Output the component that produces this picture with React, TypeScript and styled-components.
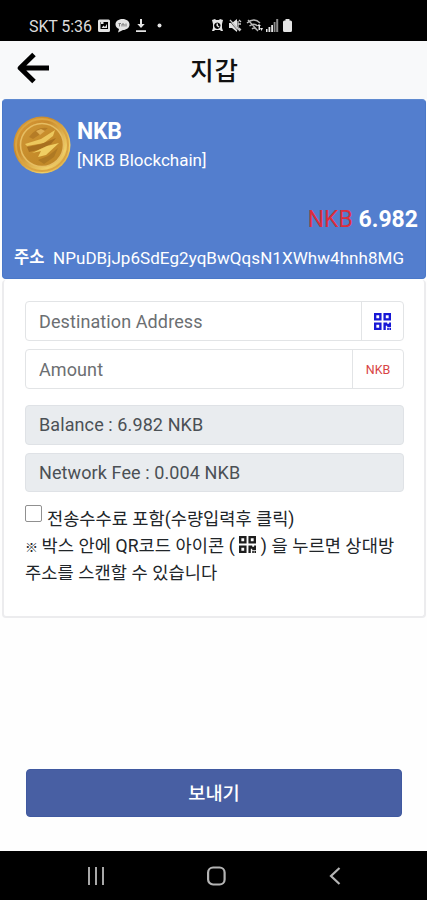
import React from 'react';
import styled, { createGlobalStyle } from 'styled-components';

const GlobalStyle = createGlobalStyle`
  * { box-sizing: border-box; }
  body { margin: 0; background: #fff; }
  button, input { font-family: inherit; }
`;

const Screen = styled.div`
  width: 427px;
  height: 900px;
  display: flex;
  flex-direction: column;
  overflow: hidden;
  background: #fefefe;
  color: #212529;
  font-family: Roboto, 'Noto Sans CJK KR', sans-serif;
`;

const StatusBar = styled.div`
  flex: none;
  height: 41px;
  padding: 12px 0 0 29px;
  display: flex;
  align-items: flex-start;
  background: #000;
  color: #dcdcdc;
`;

const Carrier = styled.span`
  width: 68px;
  font-size: 16px;
  line-height: 29px;
  letter-spacing: -0.1px;
  white-space: nowrap;
`;

const StatusIcons = styled.svg`
  flex: none;
  display: block;
`;

const Header = styled.header`
  flex: none;
  height: 58px;
  padding: 0 17px;
  display: grid;
  grid-template-columns: 34px 1fr 34px;
  align-items: center;
  background: #f8f9fa;
`;

const BackButton = styled.button`
  display: flex;
  padding: 0 0 4px;
  border: 0;
  background: none;
`;

const Title = styled.h1`
  margin: 0;
  padding: 1px 0 0 2px;
  text-align: center;
  font-size: 25.5px;
  font-weight: 500;
  line-height: 54px;
  color: #111;
  letter-spacing: 0.8px;
`;

const WalletCard = styled.section`
  flex: none;
  height: 180px;
  margin: 0 1px 0 2px;
  padding: 16px 7px 0 10px;
  border-radius: 4px;
  border: 1px solid #4a78c8;
  border-top-color: #5f8ad0;
  background: #537ece;
  color: #fff;
`;

const TokenRow = styled.div`
  display: flex;
  gap: 6px;
  height: 60px;
`;

const TokenText = styled.div`
  display: flex;
  flex-direction: column;
`;

const TokenName = styled.strong`
  margin-top: 1px;
  font-size: 23px;
  line-height: 29px;
  font-weight: 700;
  letter-spacing: -0.3px;
`;

const TokenChain = styled.span`
  font-size: 17px;
  line-height: 28px;
`;

const Amount = styled.div`
  margin-top: 28px;
  text-align: right;
  font-size: 23px;
  line-height: 31px;
  font-weight: 700;
  white-space: pre;
`;

const Unit = styled.span`
  font-weight: 400;
  color: #dc2d3c;
`;

const AddressRow = styled.div`
  margin-top: 9px;
  display: flex;
  line-height: 28px;
  white-space: nowrap;
`;

const AddressLabel = styled.strong`
  width: 40px;
  padding-left: 1px;
  font-size: 16.5px;
  font-weight: 700;
`;

const AddressValue = styled.span`
  font-size: 17px;
  letter-spacing: 0.06px;
`;

const SendCard = styled.section`
  flex: none;
  height: 338px;
  margin: 1px 1px 0 2px;
  padding: 21px 20px 0 21px;
  border: 2px solid #ececee;
  border-top: 0;
  border-radius: 4px;
  background: #fff;
`;

const FieldList = styled.div`
  display: flex;
  flex-direction: column;
  gap: 8px;
  width: 379px;
`;

const InputGroup = styled.div`
  display: flex;
  height: 40px;
  border: 1px solid #e2e4e6;
  border-radius: 4px;
  overflow: hidden;
`;

const Input = styled.input`
  flex: 1;
  min-width: 0;
  padding: 0 13px;
  border: 0;
  outline: 0;
  background: none;
  font-size: 18px;
  letter-spacing: 0.1px;
  &::placeholder { color: #6c6f72; opacity: 1; }
`;

const Addon = styled.div<{ $width: number }>`
  width: ${(p) => p.$width}px;
  display: flex;
  align-items: center;
  justify-content: center;
  border-left: 1px solid #e2e4e6;
  color: #d84444;
  font-size: 12.5px;
`;

const InfoList = styled(FieldList)`
  margin-top: 16px;
`;

const Info = styled.div`
  height: 39.5px;
  padding: 0 13px;
  border: 1px solid #dfe2e6;
  border-radius: 4px;
  background: #e9ecef;
  color: #4b5055;
  font-size: 18px;
  letter-spacing: 0.1px;
  line-height: 38px;
`;

const CheckLabel = styled.label`
  display: flex;
  margin-top: 12px;
  height: 29px;
  gap: 5px;
  font-size: 17.6px;
  line-height: 30px;
  white-space: nowrap;
`;

const Checkbox = styled.input`
  appearance: none;
  width: 17px;
  height: 17px;
  margin: 1px 0 0;
  border: 1px solid #909090;
  border-radius: 2px;
  background: #fff;
`;

const Hint = styled.p`
  margin: 0;
  font-size: 17.6px;
  line-height: 27px;
  letter-spacing: 0.08px;
  white-space: nowrap;
  svg { vertical-align: -1px; }
`;

const HintMark = styled.span`
  display: inline-block;
  width: 16.5px;
  font-size: 13px;
  line-height: 20px;
`;

const SendButton = styled.button`
  flex: none;
  width: 376px;
  height: 48px;
  margin: 151px 0 0 26px;
  border: 1px solid #4059a0;
  border-radius: 4px;
  padding: 2px 0 0;
  background: #485fa3;
  color: #fff;
  font-size: 18.7px;
  line-height: 44px;
  font-weight: 500;
`;

const NavBar = styled.nav`
  flex: none;
  height: 49px;
  margin-top: auto;
  padding: 1px 86px 0 85px;
  display: flex;
  align-items: center;
  justify-content: space-between;
  background: #000;
`;

const QrIcon = ({ size, color }: { size: number; color: string }) => (
  <svg width={size} height={size} viewBox="0 0 18 18" fill={color}>
    <path
      fillRule="evenodd"
      d="M0 0h8v8H0zM2.500 2.500v3h3v-3zM10 0h8v8h-8zM12.500 2.500v3h3v-3zM0 10h8v8H0zM2.500 12.500v3h3v-3zM10 10h4v1.500h2V10h2v5h-4v-1.500h-1.500V18H10zM14 16h1.700v2H14zM16.300 16H18v2h-1.700z"
    />
  </svg>
);

const Coin = () => (
  <svg width="58" height="58" viewBox="0 0 58 58">
    <defs>
      <linearGradient id="rim" x1="0" y1="0" x2="1" y2="1">
        <stop offset="0" stopColor="#dc9f3a" />
        <stop offset="0.35" stopColor="#c98a2c" />
        <stop offset="0.75" stopColor="#efcf68" />
        <stop offset="1" stopColor="#cc8f2c" />
      </linearGradient>
      <linearGradient id="face" x1="0" y1="0" x2="1" y2="1">
        <stop offset="0" stopColor="#cf9636" />
        <stop offset="0.5" stopColor="#c68c2b" />
        <stop offset="1" stopColor="#bd8526" />
      </linearGradient>
    </defs>
    <circle cx="29" cy="29" r="28.500" fill="url(#rim)" />
    <circle cx="29" cy="29" r="26" fill="none" stroke="#dba441" strokeWidth="2" />
    <circle cx="29" cy="29" r="21.500" fill="url(#face)" stroke="#e6bd62" strokeWidth="1.600" />
    <path d="M16 21q8-11 19-9l-6 5-9 6z" fill="#b57c26" />
    <path d="M23 15l5-2 4 2-5 4z" fill="#dfb055" />
    <path d="M12 28l16-5 14-9-2 6-9 7-17 3z" fill="#ecc75d" />
    <path d="M14 31l14-3 15-6-5 6-13 6-9 2z" fill="#a8701f" />
    <path d="M46 27L33 39l-8 2 3-6-9 2 15-7z" fill="#f0ce63" />
    <path d="M25 44l10-4 10-8-4 9-10 7z" fill="#ae7923" />
  </svg>
);

export default function App() {
  return (
    <Screen>
      <GlobalStyle />
      <StatusBar>
        <Carrier>SKT 5:36</Carrier>
        <StatusIcons width="200" height="29" viewBox="97 12 200 29" fill="#e4e4e4">
          <path
            fillRule="evenodd"
            d="M99.500 19.500h9q1.500 0 1.500 1.500v9.500q0 1.500-1.500 1.500h-9q-1.500 0-1.500-1.500V21q0-1.500 1.500-1.500zM100.500 22v7h7.500v-7zM101.500 28l2-2.500 1.500 1.500 2-3v4z"
          />
          <path d="M101 22h2.500v2H101z" />
          <path d="M122.500 19c4 0 7 2.300 7 5.500S126.500 30 123 30l-5 2.500 1-3.500c-2-1-3.500-2.500-3.500-4.500 0-3.200 3-5.500 7-5.500z" />
          <path d="M118.500 23.500h2.500M119.500 23.500v3M122 26.500v-2.500h2v2.500M126 23.500v3" stroke="#777" fill="none" />
          <path d="M140 19h2v5h2.700l-3.700 4-3.700-4h2.700zM136 30.300h10v1.700h-10z" />
          <circle cx="159.500" cy="25.500" r="2" />
          <path
            fillRule="evenodd"
            d="M212 20l3-1 1 1h3l1-1 3 1-1 4v4l1 3h-2l-1-1h-5l-1 1h-2l1-3v-4zM217.300 22.500a3.200 3.200 0 1 0 .01 0zM216.500 23.500h1.500v2l1.500 1-.8 1-2.200-1.500z"
          />
          <path d="M229 23h3l5-4v13l-5-4h-3z" />
          <path d="M230 20l10 11M239 20l2 2M238 24h3M239 28l2 2M238 21v9" stroke="#c8c8c8" strokeWidth="1.300" />
          <path d="M229.500 21l8.500 10" stroke="#333" strokeWidth="0.700" />
          <path
            d="M247 23q7-6 13 0M249.500 26q4.500-3.500 8 0M248 20l10 11M252 29q2-2 4 0"
            stroke="#b8b8b8"
            strokeWidth="1.400"
            fill="none"
          />
          <path d="M257 26l2-2 2 2zM258.500 25h1.500v5h-1.500zM260 28h3l-1.500 3z" />
          <path d="M266 29h1.500v3H266zM268.500 27h1.800v5h-1.800zM271.200 25h1.800v7h-1.800z" />
          <path d="M273.700 22h1.800v10h-1.800zM276.200 19h2v13h-2z" fill="#8d8d8d" />
          <path d="M285.500 19h4v1.500h1q1.500 0 1.500 1.500v8.500q0 1.500-1.500 1.500h-6q-1.500 0-1.500-1.500V22q0-1.500 1.500-1.500h1z" />
        </StatusIcons>
      </StatusBar>

      <Header>
        <BackButton aria-label="뒤로">
          <svg width="33" height="34" viewBox="0 0 33 34" fill="none" stroke="#000" strokeWidth="5">
            <path d="M17 3.500L3.200 17 17 30.500M4 17h28" strokeLinejoin="round" />
          </svg>
        </BackButton>
        <Title>지갑</Title>
      </Header>

      <WalletCard>
        <TokenRow>
          <Coin />
          <TokenText>
            <TokenName>NKB</TokenName>
            <TokenChain>[NKB Blockchain]</TokenChain>
          </TokenText>
        </TokenRow>
        <Amount>
          <Unit>NKB</Unit> 6.982
        </Amount>
        <AddressRow>
          <AddressLabel>주소</AddressLabel>
          <AddressValue>NPuDBjJp6SdEg2yqBwQqsN1XWhw4hnh8MG</AddressValue>
        </AddressRow>
      </WalletCard>

      <SendCard>
        <FieldList>
          <InputGroup>
            <Input placeholder="Destination Address" />
            <Addon $width={42}>
              <QrIcon size={17} color="#1717d6" />
            </Addon>
          </InputGroup>
          <InputGroup>
            <Input placeholder="Amount" />
            <Addon $width={51}>NKB</Addon>
          </InputGroup>
        </FieldList>
        <InfoList>
          <Info>Balance : 6.982 NKB</Info>
          <Info>Network Fee : 0.004 NKB</Info>
        </InfoList>
        <CheckLabel>
          <Checkbox type="checkbox" />
          <span>전송수수료 포함(수량입력후 클릭)</span>
        </CheckLabel>
        <Hint>
          <HintMark>※</HintMark>박스 안에 QR코드 아이콘 ( <QrIcon size={17} color="#1d1d1d" /> ) 을 누르면 상대방
          <br />
          주소를 스캔할 수 있습니다
        </Hint>
      </SendCard>

      <SendButton>보내기</SendButton>

      <NavBar>
        <svg width="19" height="20" viewBox="0 0 19 20" stroke="#a8a8a8" strokeWidth="2">
          <path d="M4 1v18M11 1v18M18 1v18" />
        </svg>
        <svg width="20" height="20" viewBox="0 0 20 20" fill="none" stroke="#b4b4b4" strokeWidth="2.200">
          <rect x="1.100" y="1.500" width="16.500" height="17" rx="5" />
        </svg>
        <svg width="12" height="20" viewBox="0 0 12 20" fill="none" stroke="#b4b4b4" strokeWidth="2.200">
          <path d="M10.500 2L2 10l8.500 8" />
        </svg>
      </NavBar>
    </Screen>
  );
}
